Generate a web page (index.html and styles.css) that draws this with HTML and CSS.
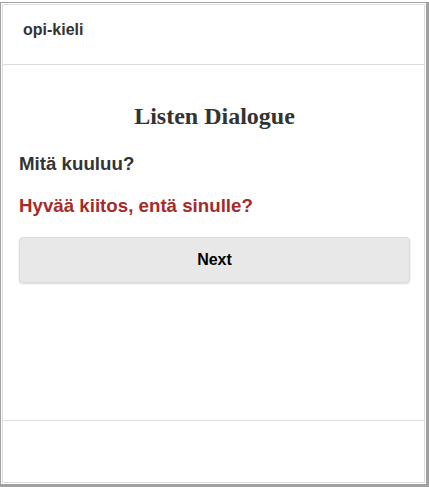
FILE: index.html
```html
<!DOCTYPE html>
<html>
<head>
<meta charset="utf-8">
<link rel="stylesheet" href="styles.css">
</head>
<body>
<div class="frame">
  <div class="app">
    <header class="header"><span class="brand">opi-kieli</span></header>
    <main class="main">
      <h1 class="title">Listen Dialogue</h1>
      <p class="line line-q">Mitä kuuluu?</p>
      <p class="line line-a">Hyvää kiitos, entä sinulle?</p>
      <button class="next">Next</button>
    </main>
    <footer class="footer"></footer>
  </div>
</div>
</body>
</html>
```

FILE: styles.css
```css
html, body {
  margin: 0;
  padding: 0;
  background: #fff;
}
body {
  padding-top: 2px;
  font-family: "Liberation Sans", Arial, sans-serif;
}
.frame {
  border-style: solid;
  border-color: #a0a0a0;
  border-width: 1px 3px 3px 1px;
  padding: 1px;
  box-sizing: border-box;
  height: 485px;
  width: 429px;
}
.app {
  border: 1px solid #dcdcdc;
  height: 100%;
  box-sizing: border-box;
  display: flex;
  flex-direction: column;
}
.header {
  height: 60px;
  box-sizing: border-box;
  border-bottom: 1px solid #dcdcdc;
  padding: 16px 0 0 20px;
}
.brand {
  font-weight: bold;
  font-size: 16px;
  line-height: 18px;
  color: #333;
}
.main {
  flex: 1;
  padding: 0 14px 0 16px;
  border-bottom: 1px solid #dcdcdc;
}
.title {
  font-family: "Liberation Serif", "Times New Roman", serif;
  font-weight: bold;
  font-size: 24px;
  color: #333;
  text-align: center;
  margin: 37px 0 0;
  line-height: 28px;
}
.line {
  font-weight: bold;
  font-size: 18.72px;
  margin: 0;
  line-height: 22px;
}
.line-q {
  color: #333;
  margin-top: 23px;
}
.line-a {
  color: #a52a2a;
  margin-top: 20px;
}
.next {
  display: block;
  width: 100%;
  height: 46px;
  margin-top: 20px;
  background: #e8e8e8;
  border: 1px solid #dcdcdc;
  border-radius: 4px;
  box-shadow: 0 1px 2px rgba(0,0,0,0.15);
  font-family: "Liberation Sans", Arial, sans-serif;
  font-weight: bold;
  font-size: 16px;
  color: #000;
}
.footer {
  height: 61px;
}
```
